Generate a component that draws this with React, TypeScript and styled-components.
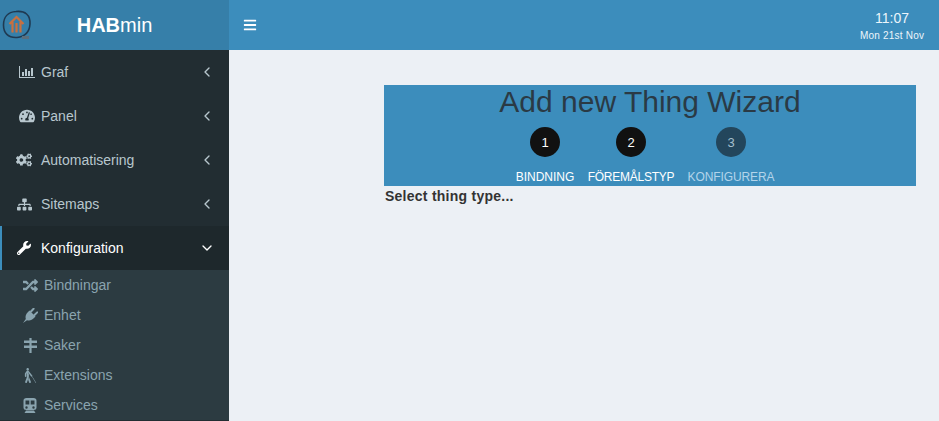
import React from 'react';
import styled, { createGlobalStyle } from 'styled-components';
import { ChevronDown, ChevronLeft } from 'lucide-react';
import {
  FaBars,
  FaBlind,
  FaCogs,
  FaRandom,
  FaSitemap,
  FaTachometerAlt,
  FaWrench,
} from 'react-icons/fa';

const GlobalStyle = createGlobalStyle`
  html, body {
    margin: 0;
    padding: 0;
    height: 100%;
    overflow: hidden;
    background-color: #ecf0f5;
    font-family: "Liberation Sans", Arial, sans-serif;
    font-size: 14px;
    color: #333;
  }
`;

const Page = styled.div`
  display: grid;
  grid-template-columns: 229px 1fr;
  grid-template-rows: 50px 1fr;
  width: 939px;
  height: 421px;
  overflow: hidden;
`;

const LogoBar = styled.div`
  display: flex;
  align-items: center;
  background-color: #367fa9;
  color: #fff;
  padding-left: 2px;
`;

const LogoTitle = styled.div`
  flex: 1;
  text-align: center;
  font-size: 20px;
  padding-right: 32px;
  b { font-weight: 700; }
  span { font-weight: 300; }
`;

const TopBar = styled.div`
  display: flex;
  align-items: center;
  justify-content: space-between;
  background-color: #3c8dbc;
  color: #fff;
  padding: 0 15px 0 14px;
`;

const Burger = styled.div`
  display: flex;
  font-size: 14px;
`;

const Clock = styled.div`
  width: 64px;
  text-align: center;
  color: #ecf5fb;
`;

const ClockTime = styled.div`
  font-size: 14px;
  line-height: 21px;
`;

const ClockDate = styled.div`
  font-size: 10px;
  line-height: 14px;
  letter-spacing: 0.2px;
  white-space: nowrap;
`;

const Sidebar = styled.nav`
  background-color: #222d32;
`;

const MenuItem = styled.div<{ $active?: boolean }>`
  display: flex;
  align-items: center;
  height: 44px;
  box-sizing: border-box;
  padding: 0 14px 0 ${(p) => (p.$active ? 13 : 15)}px;
  border-left: ${(p) => (p.$active ? '2px solid #3c8dbc' : 'none')};
  background-color: ${(p) => (p.$active ? '#1e282c' : 'transparent')};
  color: ${(p) => (p.$active ? '#fff' : '#b8c7ce')};
`;

const MenuIcon = styled.span<{ $nudge?: number; $size?: number }>`
  display: flex;
  justify-content: center;
  width: 18px;
  margin-left: ${(p) => p.$nudge ?? 0}px;
  margin-right: ${(p) => 8 - (p.$nudge ?? 0)}px;
  font-size: ${(p) => p.$size ?? 16}px;
`;

const MenuLabel = styled.span`
  flex: 1;
`;

const Caret = styled.span`
  display: flex;
`;

const SubMenu = styled.div`
  background-color: #2c3b41;
`;

const SubItem = styled.div`
  display: flex;
  align-items: center;
  height: 30px;
  padding-left: 22px;
  color: #8aa4af;
`;

const SubIcon = styled.span`
  display: flex;
  justify-content: center;
  width: 16px;
  margin-right: 6px;
  font-size: 15px;
`;

const Content = styled.main`
  padding: 35px 23px 0 155px;
`;

const WizardBox = styled.section`
  display: flex;
  flex-direction: column;
  align-items: center;
  height: 101px;
  background-color: #3c8dbc;
`;

const WizardTitle = styled.h1`
  margin: 0;
  font-size: 30px;
  font-weight: 400;
  line-height: 33px;
  color: #2a3a45;
`;

const Steps = styled.div`
  display: grid;
  grid-template-columns: 73px 99px 101px;
  margin-top: 9px;
  padding-right: 10px;
`;

const Step = styled.div`
  display: flex;
  flex-direction: column;
  align-items: center;
`;

const StepDot = styled.div<{ $done?: boolean }>`
  display: flex;
  align-items: center;
  justify-content: center;
  width: 30px;
  height: 30px;
  border-radius: 50%;
  font-size: 13px;
  background-color: ${(p) => (p.$done ? '#111' : '#23465c')};
  color: ${(p) => (p.$done ? '#fff' : '#a4bfce')};
`;

const StepLabel = styled.div<{ $done?: boolean; $spacing: number }>`
  margin-top: 12px;
  font-size: 12px;
  line-height: 16px;
  letter-spacing: ${(p) => p.$spacing}px;
  white-space: nowrap;
  color: ${(p) => (p.$done ? '#fff' : '#b3d4ea')};
`;

const Hint = styled.div`
  margin-top: 2px;
  padding-left: 1px;
  font-weight: 700;
  letter-spacing: 0.25px;
  line-height: 17px;
  color: #333;
`;

function BarChartIcon() {
  return (
    <svg width="16" height="14" viewBox="0 0 16 14" fill="currentColor">
      <rect x="0" y="1" width="1" height="12" />
      <rect x="0" y="12" width="16" height="1" />
      <rect x="3" y="7" width="2" height="4" />
      <rect x="6" y="4" width="2" height="7" />
      <rect x="9" y="6" width="2" height="5" />
      <rect x="12" y="3" width="2" height="8" />
    </svg>
  );
}

function PlugIcon() {
  return (
    <svg width="15" height="15" viewBox="0 0 15 15" fill="currentColor">
      <path d="M0 15 L2.8 11 C2 8 3 6 5 4 L6.5 2.5 L12.5 8.5 L11 10 C9 12 7 13 4 12.2 Z" />
      <path d="M8 3.5 L10.6 0.8 M11.5 7 L14.2 4.4" stroke="currentColor" strokeWidth="2" strokeLinecap="round" />
    </svg>
  );
}

function SignIcon() {
  return (
    <svg width="15" height="15" viewBox="0 0 15 15" fill="currentColor">
      <rect x="6.4" y="0" width="2.2" height="15" />
      <path d="M1 2.5 H14 V5 H1 Z" />
      <path d="M1 7.5 H14 V10 H1 Z" />
    </svg>
  );
}

function SubwayIcon() {
  return (
    <svg width="14" height="15" viewBox="0 0 14 15" fill="currentColor">
      <path
        fillRule="evenodd"
        d="M3.5 0 H10.5 C12.4 0 13.5 1 13.5 2.8 V9.5 C13.5 11.2 12.4 12 10.5 12 H3.5 C1.6 12 0.5 11.2 0.5 9.5 V2.8 C0.5 1 1.6 0 3.5 0 Z M2.5 2.5 V6.5 H6.3 V2.5 Z M7.7 2.5 V6.5 H11.5 V2.5 Z M3.5 8.3 A1.2 1.2 0 1 0 3.5 10.7 A1.2 1.2 0 1 0 3.5 8.3 Z M10.5 8.3 A1.2 1.2 0 1 0 10.5 10.7 A1.2 1.2 0 1 0 10.5 8.3 Z"
      />
      <path d="M3 12.5 H11 L12.5 15 H1.5 Z" />
    </svg>
  );
}

function Logo() {
  return (
    <svg width="30" height="32" viewBox="0 0 30 32" fill="none">
      <path d="M14 2.5 C23 1.5 28.5 6 28 15 C27.5 23 23 27.5 15 28.5 C6 29 1.5 24 1.5 16 C1.5 8 6 3 14 2.5Z" stroke="#1f3a52" strokeWidth="1.6" />
      <path d="M7.5 15 L14.5 8 L21.5 15 M10.5 13 V23.5 M18.5 13 V23.5 M14.5 14 V23.5" stroke="#c9703f" strokeWidth="2.2" />
      <rect x="20" y="27" width="7" height="3" fill="#5b6f7d" />
    </svg>
  );
}

const menu = [
  { label: 'Graf', icon: <BarChartIcon />, nudge: 3 },
  { label: 'Panel', icon: <FaTachometerAlt />, nudge: 3 },
  { label: 'Automatisering', icon: <FaCogs /> },
  { label: 'Sitemaps', icon: <FaSitemap />, size: 15 },
];

const subMenu = [
  { label: 'Bindningar', icon: <FaRandom /> },
  { label: 'Enhet', icon: <PlugIcon /> },
  { label: 'Saker', icon: <SignIcon /> },
  { label: 'Extensions', icon: <FaBlind /> },
  { label: 'Services', icon: <SubwayIcon /> },
];

const steps = [
  { n: 1, label: 'BINDNING', done: true, spacing: 0 },
  { n: 2, label: 'FÖREMÅLSTYP', done: true, spacing: -0.25 },
  { n: 3, label: 'KONFIGURERA', done: false, spacing: -0.1 },
];

export default function App() {
  return (
    <Page>
      <GlobalStyle />
      <LogoBar>
        <Logo />
        <LogoTitle>
          <b>HAB</b>
          <span>min</span>
        </LogoTitle>
      </LogoBar>
      <TopBar>
        <Burger>
          <FaBars />
        </Burger>
        <Clock>
          <ClockTime>11:07</ClockTime>
          <ClockDate>Mon 21st Nov</ClockDate>
        </Clock>
      </TopBar>
      <Sidebar>
        {menu.map((item) => (
          <MenuItem key={item.label}>
            <MenuIcon $nudge={item.nudge} $size={item.size}>
              {item.icon}
            </MenuIcon>
            <MenuLabel>{item.label}</MenuLabel>
            <Caret>
              <ChevronLeft size={16} strokeWidth={2} />
            </Caret>
          </MenuItem>
        ))}
        <MenuItem $active>
          <MenuIcon $size={14}>
            <FaWrench />
          </MenuIcon>
          <MenuLabel>Konfiguration</MenuLabel>
          <Caret>
            <ChevronDown size={16} strokeWidth={2} />
          </Caret>
        </MenuItem>
        <SubMenu>
          {subMenu.map((item) => (
            <SubItem key={item.label}>
              <SubIcon>{item.icon}</SubIcon>
              {item.label}
            </SubItem>
          ))}
        </SubMenu>
      </Sidebar>
      <Content>
        <WizardBox>
          <WizardTitle>Add new Thing Wizard</WizardTitle>
          <Steps>
            {steps.map((s) => (
              <Step key={s.n}>
                <StepDot $done={s.done}>{s.n}</StepDot>
                <StepLabel $done={s.done} $spacing={s.spacing}>
                  {s.label}
                </StepLabel>
              </Step>
            ))}
          </Steps>
        </WizardBox>
        <Hint>Select thing type...</Hint>
      </Content>
    </Page>
  );
}
